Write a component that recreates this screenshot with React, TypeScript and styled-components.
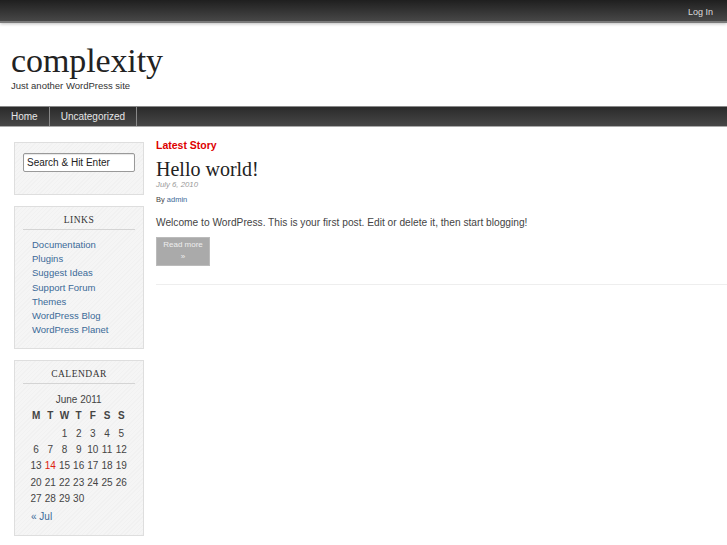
import React from "react";
import styled, { createGlobalStyle } from "styled-components";

const GlobalStyle = createGlobalStyle`
  html, body {
    margin: 0;
    padding: 0;
    background: #fff;
    font-family: "Liberation Sans", Arial, sans-serif;
    color: #444;
  }
  a { text-decoration: none; }
`;

const TopBar = styled.div`
  height: 21px;
  background: linear-gradient(#1f1f1f, #474747);
  border-bottom: 2px solid #7a7a7a;
  box-shadow: 0 1px 3px rgba(0, 0, 0, 0.25);
  display: flex;
  justify-content: flex-end;
  align-items: center;
  padding: 0 14px;
`;

const LogIn = styled.a`
  color: #ddd;
  font-size: 9px;
  margin-top: 2px;
`;

const Header = styled.div`
  height: 83px;
  padding: 0 11px;
  box-sizing: border-box;
`;

const SiteTitle = styled.h1`
  margin: 0;
  padding-top: 19px;
  font-family: "Liberation Serif", "Times New Roman", serif;
  font-weight: normal;
  font-size: 34px;
  line-height: 37px;
  color: #222;
  letter-spacing: -0.1px;
`;

const Tagline = styled.div`
  font-size: 9.5px;
  color: #333;
  margin-top: 1px;
`;

const NavBar = styled.div`
  height: 19px;
  background: linear-gradient(#2a2a2a, #474747);
  border-top: 1px solid #888;
  border-bottom: 1px solid #aaa;
  display: flex;
`;

const NavItem = styled.a`
  color: #e6e6e6;
  font-size: 10px;
  padding: 0 11px;
  display: flex;
  align-items: center;
  border-right: 1px solid #888;
`;

const Body = styled.div`
  display: flex;
  gap: 12px;
  padding: 11px 0 0 14px;
`;

const Sidebar = styled.div`
  width: 130px;
  margin-top: 4px;
  flex-shrink: 0;
  display: flex;
  flex-direction: column;
  gap: 11px;
`;

const Widget = styled.div<{ $h: number }>`
  height: ${(p) => p.$h}px;
  box-sizing: border-box;
  border: 1px solid #dedede;
  background: repeating-linear-gradient(
    135deg,
    #f5f5f5 0px,
    #f5f5f5 2px,
    #f1f1f1 2px,
    #f1f1f1 3px
  );
  padding: 0 8px;
`;

const SearchInput = styled.input`
  margin-top: 10px;
  width: 112px;
  height: 19px;
  box-sizing: border-box;
  border: 1px solid #999;
  border-radius: 2px;
  font-family: "Liberation Sans", Arial, sans-serif;
  font-size: 10px;
  color: #222;
  padding: 1px 3px;
  background: #fff;
  box-shadow: inset 0 1px 1px rgba(0, 0, 0, 0.1);
`;

const WidgetTitle = styled.h3`
  margin: 8px 0 0;
  padding-bottom: 4px;
  border-bottom: 1px solid #d4d4d4;
  font-family: "Liberation Serif", "Times New Roman", serif;
  font-weight: normal;
  font-size: 9.5px;
  letter-spacing: 0.5px;
  text-align: center;
  color: #333;
`;

const LinkList = styled.ul`
  list-style: none;
  margin: 8px 0 0;
  padding: 0 0 0 9px;
`;

const LinkItem = styled.li`
  font-size: 9.5px;
  line-height: 14.2px;
  a { color: #3b6a98; }
`;

const CalTable = styled.table`
  margin: 10px 0 0 6px;
  border-collapse: collapse;
  font-size: 10px;
  color: #444;
  caption {
    font-size: 10px;
    padding-bottom: 1px;
    color: #444;
  }
  th {
    width: 14.2px;
    font-weight: bold;
    height: 18px;
    padding: 0 0 1px;
    text-align: center;
  }
  td {
    height: 16.3px;
    padding: 0;
    text-align: center;
  }
`;

const Today = styled.span`
  color: #d21;
`;

const PrevLink = styled.a`
  display: block;
  margin: 5px 0 0 8px;
  font-size: 10px;
  color: #3b6a98;
`;

const Main = styled.div`
  flex: 1;
`;

const Kicker = styled.h2`
  margin: 0;
  font-size: 10.5px;
  font-weight: bold;
  color: #d00;
  line-height: 14px;
`;

const PostTitle = styled.h2`
  margin: 6px 0 0;
  font-family: "Liberation Serif", "Times New Roman", serif;
  font-weight: normal;
  font-size: 20px;
  line-height: 22px;
  color: #222;
`;

const PostDate = styled.div`
  font-size: 7.8px;
  font-style: italic;
  color: #999;
  line-height: 10px;
`;

const Byline = styled.div`
  margin-top: 5px;
  font-size: 7.5px;
  color: #444;
  a { color: #3b6a98; }
`;

const Excerpt = styled.p`
  margin: 13px 0 0;
  font-size: 10.2px;
  color: #444;
`;

const ReadMore = styled.a`
  margin-top: 9px;
  width: 54px;
  height: 29px;
  background: #aaa;
  border: 1px solid #bbb;
  box-sizing: border-box;
  display: flex;
  flex-direction: column;
  align-items: center;
  color: #eee;
  font-size: 8px;
  line-height: 12px;
  padding-top: 1px;
`;

const Divider = styled.hr`
  margin: 18px 0 0;
  border: none;
  border-top: 1px solid #eee;
`;

const links = [
  "Documentation",
  "Plugins",
  "Suggest Ideas",
  "Support Forum",
  "Themes",
  "WordPress Blog",
  "WordPress Planet",
];

const weeks: (number | null)[][] = [
  [null, null, 1, 2, 3, 4, 5],
  [6, 7, 8, 9, 10, 11, 12],
  [13, 14, 15, 16, 17, 18, 19],
  [20, 21, 22, 23, 24, 25, 26],
  [27, 28, 29, 30, null, null, null],
];

const App = () => {
  return (
    <>
      <GlobalStyle />
      <TopBar>
        <LogIn href="#">Log In</LogIn>
      </TopBar>
      <Header>
        <SiteTitle>complexity</SiteTitle>
        <Tagline>Just another WordPress site</Tagline>
      </Header>
      <NavBar>
        <NavItem href="#">Home</NavItem>
        <NavItem href="#">Uncategorized</NavItem>
      </NavBar>
      <Body>
        <Sidebar>
          <Widget $h={53}>
            <SearchInput defaultValue="Search & Hit Enter" />
          </Widget>
          <Widget $h={143}>
            <WidgetTitle>LINKS</WidgetTitle>
            <LinkList>
              {links.map((l) => (
                <LinkItem key={l}>
                  <a href="#">{l}</a>
                </LinkItem>
              ))}
            </LinkList>
          </Widget>
          <Widget $h={176}>
            <WidgetTitle>CALENDAR</WidgetTitle>
            <CalTable>
              <caption>June 2011</caption>
              <thead>
                <tr>
                  {["M", "T", "W", "T", "F", "S", "S"].map((d, i) => (
                    <th key={i}>{d}</th>
                  ))}
                </tr>
              </thead>
              <tbody>
                {weeks.map((w, i) => (
                  <tr key={i}>
                    {w.map((d, j) => (
                      <td key={j}>{d === 14 ? <Today>14</Today> : d ?? ""}</td>
                    ))}
                  </tr>
                ))}
              </tbody>
            </CalTable>
            <PrevLink href="#">« Jul</PrevLink>
          </Widget>
        </Sidebar>
        <Main>
          <Kicker>Latest Story</Kicker>
          <PostTitle>Hello world!</PostTitle>
          <PostDate>July 6, 2010</PostDate>
          <Byline>
            By <a href="#">admin</a>
          </Byline>
          <Excerpt>
            Welcome to WordPress. This is your first post. Edit or delete it, then start blogging!
          </Excerpt>
          <ReadMore href="#">
            <span>Read more</span>
            <span>»</span>
          </ReadMore>
          <Divider />
        </Main>
      </Body>
    </>
  );
};

export default App;
